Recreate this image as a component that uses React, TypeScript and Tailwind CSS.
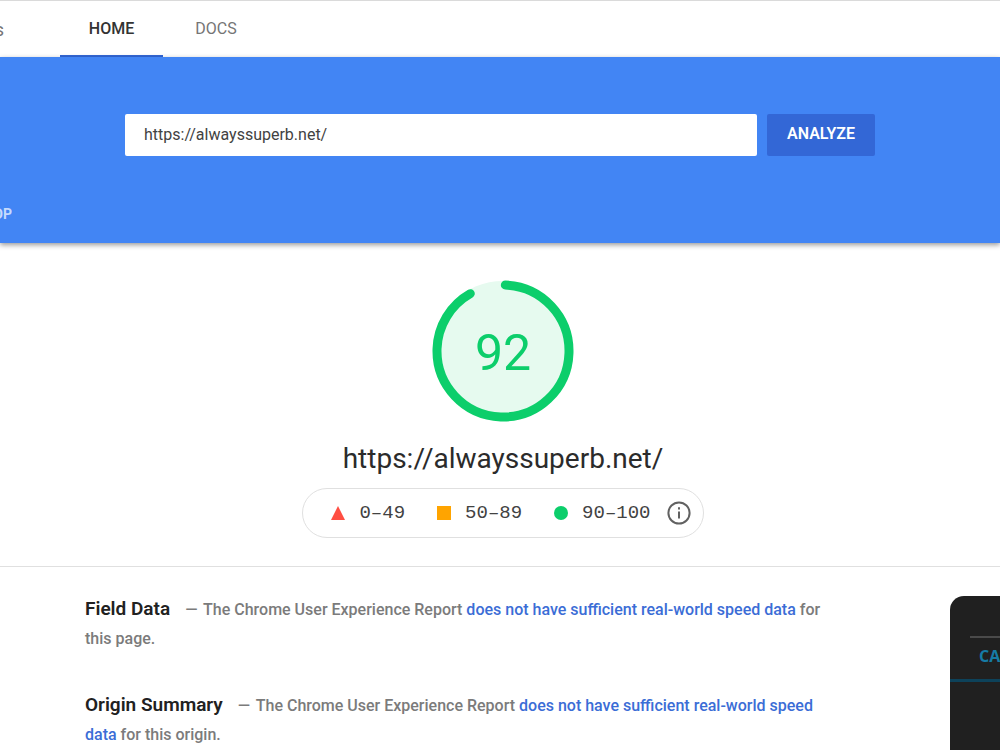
import { useState } from "react";
import type { FormEvent, ReactNode } from "react";

const REPORT_DOCS = "#field-data-docs";

export default function App() {
  const [url, setUrl] = useState("https://alwayssuperb.net/");
  const [analyzed, setAnalyzed] = useState(url);

  function analyze(e: FormEvent) {
    e.preventDefault();
    setAnalyzed(url);
  }

  return (
    <div className="flex h-screen flex-col overflow-hidden bg-white font-['Roboto',sans-serif] text-[#212121]">
      <TopBar />

      <section className="relative shrink-0 bg-[#4285f4] shadow-[0_2px_5px_rgba(0,0,0,0.4)]">
        <form onSubmit={analyze} className="mx-auto flex max-w-[750px] gap-[10px] pt-[57px]">
          <input
            type="text"
            aria-label="Enter a web page URL"
            value={url}
            onChange={(e) => setUrl(e.target.value)}
            className="h-[42px] min-w-0 flex-1 rounded-xs bg-white px-[19px] pb-0.5 text-base text-[#424242] outline-none"
          />
          <button
            type="submit"
            className="h-[42px] w-[108px] rounded-xs bg-[#3367d6] pb-0.5 text-base font-semibold text-white"
          >
            ANALYZE
          </button>
        </form>
        <div className="mt-[46px] flex h-[41px] w-3 justify-end overflow-hidden">
          <button type="button" className="h-6 text-sm font-bold text-[#c6dafc]">
            DESKTOP
          </button>
        </div>
      </section>

      <section className="flex shrink-0 flex-col items-center border-b border-[#e0e0e0] pt-[37px] pb-7 pl-[6px]">
        <Gauge score={92} />
        <h1 className="mt-[19px] text-[28px] leading-9 text-[#2b2b2b]">{analyzed}</h1>
        <Scale />
      </section>

      <section className="flex min-h-0 flex-1 justify-between pt-[27px] pl-[85px]">
        <div className="max-w-[755px]">
          <Summary title="Field Data" subject="page" />
          <Summary title="Origin Summary" subject="origin" />
        </div>
        <PhonePreview />
      </section>
    </div>
  );
}

function TopBar() {
  return (
    <header className="flex h-[57px] shrink-0 border-t border-[#dadada]">
      <div className="flex w-[60px] items-center">
        <div className="flex w-1 justify-end overflow-hidden pt-0.5">
          <span className="text-lg text-[#757575]">Insights</span>
        </div>
      </div>
      <nav className="flex text-base font-medium">
        <a href="#home" className="flex w-[103px] justify-center border-b-2 border-[#3367d6] pt-4 text-[#333333]">
          HOME
        </a>
        <a href="#docs" className="flex w-[106px] justify-center pt-4 font-normal text-[#757575]">
          DOCS
        </a>
      </nav>
    </header>
  );
}

function Gauge({ score }: { score: number }) {
  const r = 66;
  const length = 2 * Math.PI * r;
  // the round caps add to both ends of the arc
  const arc = (score / 100) * length - 4;
  return (
    <div className="grid place-items-center">
      <svg viewBox="0 0 142 142" className="col-start-1 row-start-1 size-[142px]" fill="none">
        <circle cx="71" cy="71" r="70" fill="#e6faef" />
        <circle
          cx="71"
          cy="71"
          r={r}
          stroke="#0cce6b"
          strokeWidth="9"
          strokeLinecap="round"
          strokeDasharray={`${arc} ${length}`}
          transform="rotate(-88 71 71)"
        />
      </svg>
      <span className="col-start-1 row-start-1 pt-1 text-[50px] leading-none text-[#0cce6b]">{score}</span>
    </div>
  );
}

function Scale() {
  return (
    <div className="mt-[11px] flex h-[50px] items-center rounded-full border border-[#e0e0e0] pr-3 pl-7 font-['Liberation_Mono',monospace] text-[19px] text-[#424242]">
      <span className="flex items-center gap-[14px]">
        <svg viewBox="0 0 14 14" className="size-[14px]">
          <path d="M7 0 14 14H0Z" fill="#ff4e42" />
        </svg>
        0–49
      </span>
      <span className="ml-8 flex items-center gap-[14px]">
        <span className="size-[14px] bg-[#ffa400]" />
        50–89
      </span>
      <span className="ml-8 flex items-center gap-[14px]">
        <span className="size-[14px] rounded-full bg-[#0cce6b]" />
        90–100
      </span>
      <button type="button" aria-label="About the scale" className="ml-4">
        <svg viewBox="0 0 24 24" className="size-6" fill="none" stroke="#616161" strokeWidth="2">
          <circle cx="12" cy="12" r="10.6" />
          <path d="M12 10.5v7M12 6.2v2.2" />
        </svg>
      </button>
    </div>
  );
}

function Summary({ title, subject }: { title: string; subject: string }) {
  return (
    <p className="mb-[37px] text-base leading-[29px] font-medium text-[#7b7b7b]">
      <strong className="mr-[15px] text-[19px] leading-[29px] font-semibold text-[#212121]">{title}</strong>
      <span className="mr-0.5">—</span> The Chrome User Experience Report{" "}
      <DocLink>does not have sufficient real-world speed data</DocLink> for this {subject}.
    </p>
  );
}

function DocLink({ children }: { children: ReactNode }) {
  return (
    <a href={REPORT_DOCS} className="text-[#3b6dd6]">
      {children}
    </a>
  );
}

// Screenshot of the tested page, running past the window's right edge
function PhonePreview() {
  return (
    <div className="mt-0.5 w-[50px] shrink-0 overflow-hidden rounded-tl-[14px] bg-[#202020] font-['Open_Sans',sans-serif]">
      <div className="mt-10 ml-5 border-t-2 border-[#4a4a4a]" />
      <div className="flex h-11 items-center border-b-3 border-[#0d425a] pb-1.5 pl-[29px] text-base font-bold whitespace-nowrap text-[#167ba5]">
        CATEGORIES
      </div>
    </div>
  );
}
